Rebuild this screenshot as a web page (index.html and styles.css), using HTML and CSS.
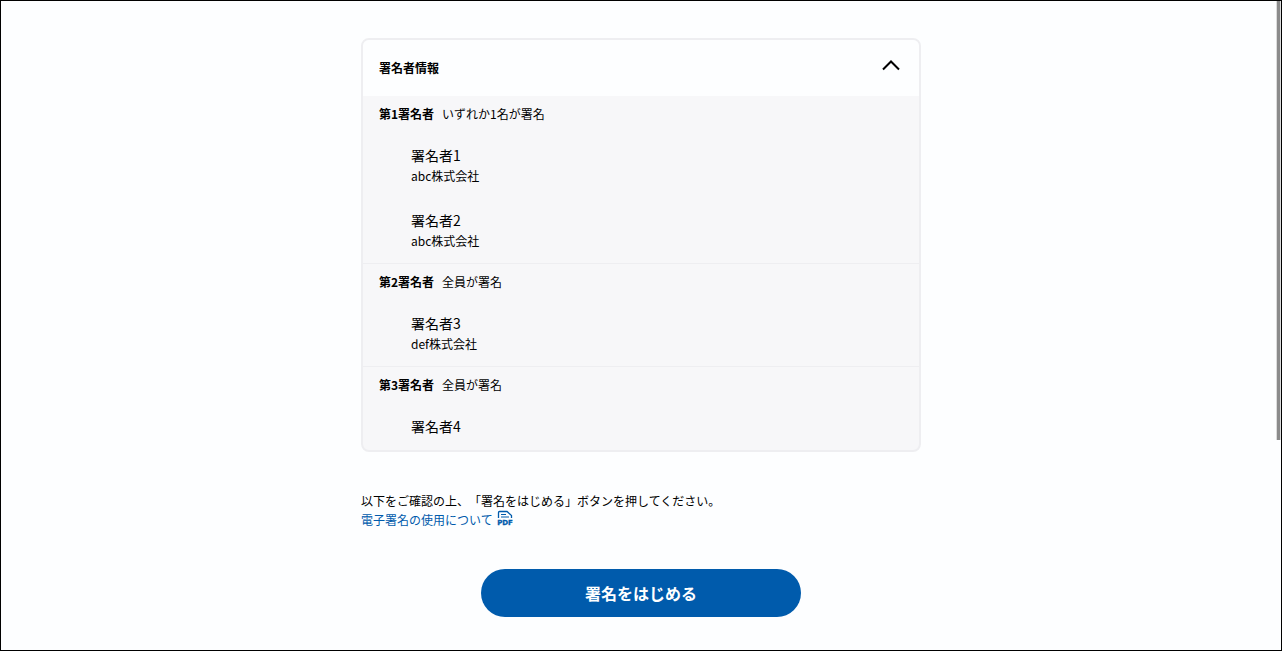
FILE: index.html
```html
<!DOCTYPE html>
<html lang="ja">
<head>
    <meta charset="UTF-8">
    <meta name="viewport" content="width=device-width, initial-scale=1.0">
    <title>署名者情報</title>
    <link rel="stylesheet" href="styles.css">
</head>
<body>

    <main class="content">
        <section class="card">
            <button class="card-header" type="button" aria-expanded="true" aria-controls="signers">
                <span>署名者情報</span>
                <svg class="chevron" viewBox="0 0 18 12" aria-hidden="true">
                    <path d="M1 10.5 L9 2.5 L17 10.5" fill="none" stroke="#000" stroke-width="2"/>
                </svg>
            </button>

            <div id="signers">
                <div class="group">
                    <h2 class="group-title">第1署名者 <span class="rule">いずれか1名が署名</span></h2>
                    <ul class="signers">
                        <li class="signer">
                            <p class="name">署名者1</p>
                            <p class="company">abc株式会社</p>
                        </li>
                        <li class="signer">
                            <p class="name">署名者2</p>
                            <p class="company">abc株式会社</p>
                        </li>
                    </ul>
                </div>

                <div class="group">
                    <h2 class="group-title">第2署名者 <span class="rule">全員が署名</span></h2>
                    <ul class="signers">
                        <li class="signer">
                            <p class="name">署名者3</p>
                            <p class="company">def株式会社</p>
                        </li>
                    </ul>
                </div>

                <div class="group">
                    <h2 class="group-title">第3署名者 <span class="rule">全員が署名</span></h2>
                    <ul class="signers">
                        <li class="signer">
                            <p class="name">署名者4</p>
                        </li>
                    </ul>
                </div>
            </div>
        </section>

        <div class="notice">
            <p>以下をご確認の上、「署名をはじめる」ボタンを押してください。</p>
            <a class="pdf-link" href="#">電子署名の使用について
                <svg class="pdf-icon" viewBox="0 0 16 16" aria-hidden="true">
                    <path d="M1.5 8 V2.5 Q1.5 1.5 2.5 1.5 H10 L14.5 5.5 V8" fill="none" stroke="currentColor" stroke-width="1.3"/>
                    <path d="M4 4.5 H9 M4 7 H12" fill="none" stroke="currentColor" stroke-width="1.2"/>
                    <text class="pdf-text" x="8" y="15" text-anchor="middle">PDF</text>
                </svg>
            </a>
        </div>

        <button class="start-button" type="button">署名をはじめる</button>
    </main>

    <div class="scroll-thumb"></div>

</body>
</html>
```

FILE: styles.css
```css
* {
    box-sizing: border-box;
}

body {
    position: relative;
    min-height: 100vh;
    margin: 0;
    border: 1px solid #000;
    background-color: #fdfeff;
    color: #000;
    font-family: "Noto Sans CJK JP", sans-serif;
    font-size: 12px;
    line-height: 19px;
    text-spacing-trim: space-all;
}

h2, p, ul {
    margin: 0;
    padding: 0;
}

button {
    border: none;
    font-family: inherit;
    font-weight: bold;
    cursor: pointer;
}

.content {
    display: flex;
    flex-direction: column;
    max-width: 560px;
    margin: 0 auto;
    padding: 37px 0 32px;
}

.card {
    overflow: hidden;
    border: 2px solid #eeeef1;
    border-radius: 8px;
    background-color: #f7f7f9;
}

.card-header {
    display: flex;
    align-items: center;
    justify-content: space-between;
    width: 100%;
    height: 56px;
    padding: 0 19px 2px 16px;
    background-color: #fdfeff;
    color: #000;
    font-size: 12px;
}

.chevron {
    width: 18px;
    height: 12px;
    margin-bottom: 4px;
}

.group + .group {
    border-top: 1px solid #eeeef1;
}

.group-title {
    display: flex;
    gap: 8px;
    padding: 8px 16px 10px;
    font-size: 12px;
}

.rule {
    font-weight: normal;
}

.signers {
    list-style: none;
}

.signer {
    padding: 11px 16px 13px 48px;
}

.name {
    font-size: 14px;
    line-height: 22px;
}

.notice {
    margin-top: 39px;
}

.pdf-link {
    display: inline-flex;
    align-items: center;
    gap: 4px;
    color: #005bac;
    text-decoration: none;
}

.pdf-icon {
    width: 16px;
    height: 16px;
    margin-bottom: 3px;
    overflow: visible;
}

.pdf-text {
    fill: currentColor;
    stroke: currentColor;
    stroke-width: 0.3px;
    font-family: "DejaVu Sans", sans-serif;
    font-size: 7px;
    font-weight: bold;
}

.start-button {
    align-self: center;
    width: 320px;
    max-width: 100%;
    height: 48px;
    margin-top: 40px;
    border-radius: 24px;
    background-color: #005bac;
    color: #fff;
    font-size: 16px;
}

.scroll-thumb {
    position: absolute;
    top: 0;
    right: 0;
    width: 5px;
    height: 439px;
    border: solid #dcdcdc;
    border-width: 0 1px;
    background-color: #8b8b8b;
}
```
